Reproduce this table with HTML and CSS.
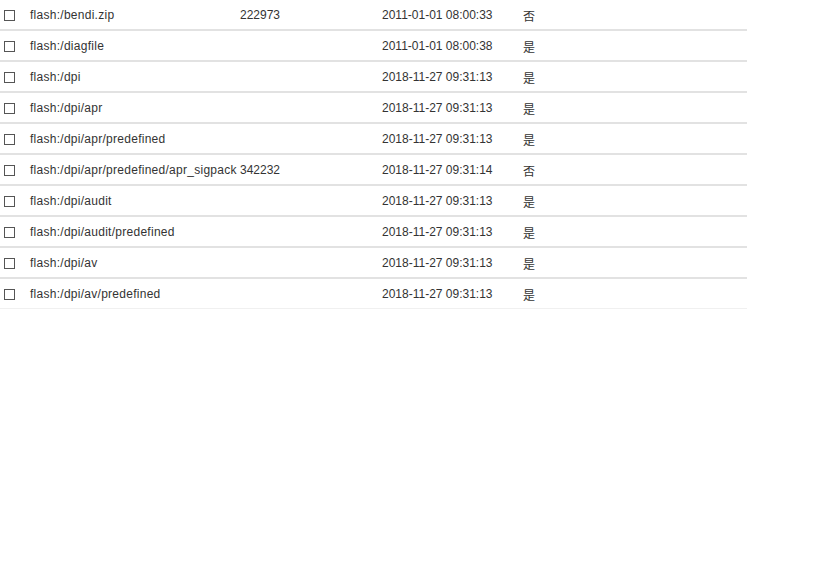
FILE: index.html
```html
<!DOCTYPE html>
<html lang="zh-CN">
<head>
<meta charset="UTF-8">
<title>File List</title>
<link rel="stylesheet" href="styles.css">
</head>
<body>
    <!-- File table -->
    <table class="file-table">
        <colgroup>
            <col class="col-check">
            <col class="col-name">
            <col class="col-size">
            <col class="col-time">
            <col class="col-flag">
        </colgroup>
        <tbody>
            <tr><td><span class="check"></span></td><td class="name">flash:/bendi.zip</td><td>222973</td><td>2011-01-01 08:00:33</td><td>否</td></tr>
            <tr><td><span class="check"></span></td><td class="name">flash:/diagfile</td><td></td><td>2011-01-01 08:00:38</td><td>是</td></tr>
            <tr><td><span class="check"></span></td><td class="name">flash:/dpi</td><td></td><td>2018-11-27 09:31:13</td><td>是</td></tr>
            <tr><td><span class="check"></span></td><td class="name">flash:/dpi/apr</td><td></td><td>2018-11-27 09:31:13</td><td>是</td></tr>
            <tr><td><span class="check"></span></td><td class="name">flash:/dpi/apr/predefined</td><td></td><td>2018-11-27 09:31:13</td><td>是</td></tr>
            <tr><td><span class="check"></span></td><td class="name">flash:/dpi/apr/predefined/apr_sigpack</td><td>342232</td><td>2018-11-27 09:31:14</td><td>否</td></tr>
            <tr><td><span class="check"></span></td><td class="name">flash:/dpi/audit</td><td></td><td>2018-11-27 09:31:13</td><td>是</td></tr>
            <tr><td><span class="check"></span></td><td class="name">flash:/dpi/audit/predefined</td><td></td><td>2018-11-27 09:31:13</td><td>是</td></tr>
            <tr><td><span class="check"></span></td><td class="name">flash:/dpi/av</td><td></td><td>2018-11-27 09:31:13</td><td>是</td></tr>
            <tr><td><span class="check"></span></td><td class="name">flash:/dpi/av/predefined</td><td></td><td>2018-11-27 09:31:13</td><td>是</td></tr>
        </tbody>
    </table>
</body>
</html>
```

FILE: styles.css
```css
/* General Styles */
* {
    margin: 0;
    padding: 0;
    box-sizing: border-box;
}

body {
    background: #fff;
    color: #333;
    font-family: 'Liberation Sans', Arial, 'Noto Sans CJK SC', sans-serif;
    font-size: 12px;
}

/* File table */
.file-table {
    width: 747px;
    border-collapse: separate;
    border-spacing: 0;
    table-layout: fixed;
}

.col-check { width: 30px; }
.col-name { width: 210px; }
.col-size { width: 142px; }
.col-time { width: 141px; }

.file-table td {
    height: 31px;
    padding: 1px 0 0;
    white-space: nowrap;
    border-bottom: 2px solid #e2e2e2;
    vertical-align: middle;
}

.file-table tr:last-child td {
    height: 30px;
    border-bottom: 1px solid #f0f0f0;
}

.file-table td:first-child {
    padding-left: 4px;
}

.file-table td.name {
    letter-spacing: 0.27px;
}

.check {
    display: block;
    width: 11px;
    height: 11px;
    border: 1px solid #555;
    background: #fff;
}
```
